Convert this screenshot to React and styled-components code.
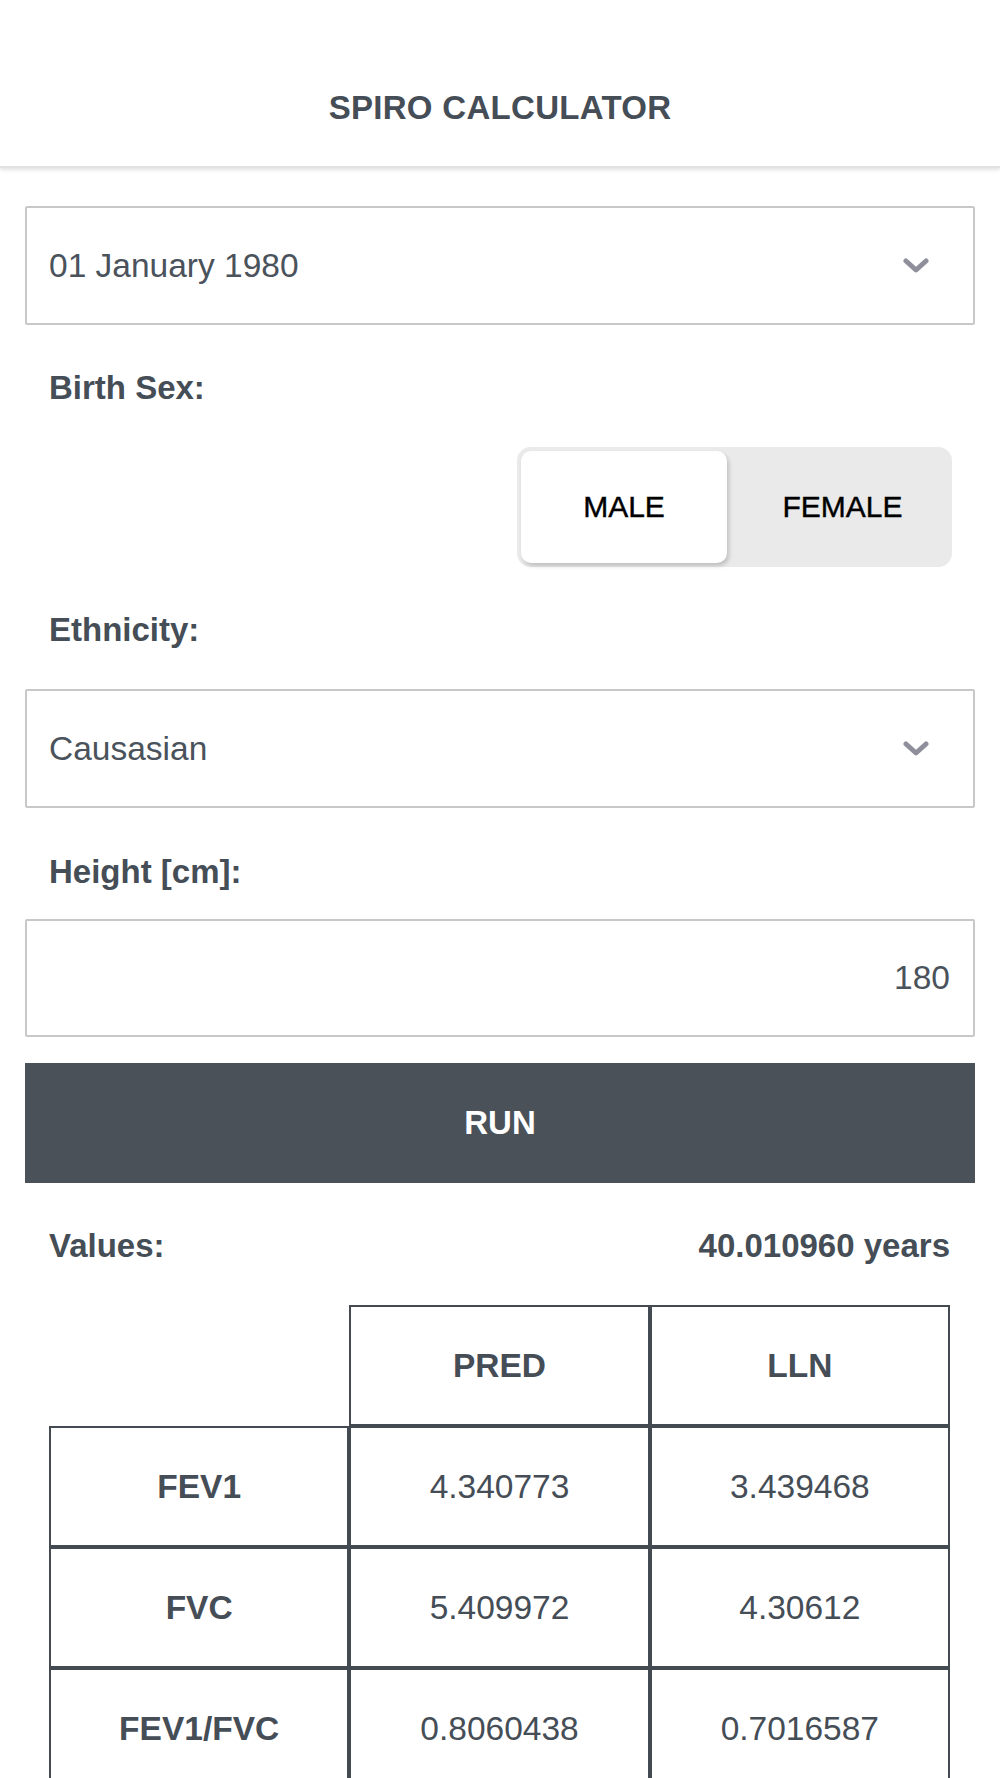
import React from "react";
import styled, { createGlobalStyle } from "styled-components";

const GlobalStyle = createGlobalStyle`
  body {
    margin: 0;
    background: #ffffff;
    font-family: "Liberation Sans", Arial, sans-serif;
    color: #454d56;
  }
  * {
    box-sizing: border-box;
  }
`;

const Page = styled.div`
  width: 1000px;
  min-height: 1778px;
  background: #ffffff;
`;

const Header = styled.header`
  height: 168px;
  padding-top: 50px;
  display: flex;
  align-items: center;
  justify-content: center;
  border-bottom: 2px solid #e2e2e2;
  box-shadow: 0 2px 4px rgba(0, 0, 0, 0.12);
`;

const Title = styled.h1`
  margin: 0;
  font-size: 33px;
  font-weight: bold;
  color: #454d56;
  letter-spacing: 0.3px;
`;

const Content = styled.main`
  padding: 38px 25px 0;
  display: flex;
  flex-direction: column;
`;

const SelectBox = styled.div`
  height: 119px;
  border: 2px solid #c8c8c8;
  border-radius: 2px;
  display: flex;
  align-items: center;
  justify-content: space-between;
  padding: 0 44px 0 22px;
  font-size: 33.5px;
  color: #4a525b;
`;

const Label = styled.div`
  padding-left: 24px;
  margin-top: ${(p) => p.$top || 43}px;
  margin-bottom: ${(p) => p.$bottom || 39}px;
  font-size: 33px;
  line-height: 40px;
  font-weight: bold;
  color: #454d56;
`;

const ToggleRow = styled.div`
  display: flex;
  justify-content: flex-end;
  padding-right: 23px;
`;

const Toggle = styled.div`
  width: 435px;
  height: 120px;
  padding: 4px;
  border-radius: 14px;
  background: #eaeaea;
  display: grid;
  grid-template-columns: 206px 1fr;
`;

const Segment = styled.div`
  display: flex;
  align-items: center;
  justify-content: center;
  padding-left: ${(p) => (p.$active ? "0" : "10px")};
  border-radius: 10px;
  font-size: 30px;
  color: #000000;
  -webkit-text-stroke: 0.4px #000000;
  background: ${(p) => (p.$active ? "#ffffff" : "transparent")};
  box-shadow: ${(p) => (p.$active ? "2px 3px 4px rgba(0, 0, 0, 0.18)" : "none")};
`;

const NumberInput = styled.input`
  height: 118px;
  width: 100%;
  border: 2px solid #c8c8c8;
  border-radius: 2px;
  padding: 0 23px;
  text-align: right;
  font-family: "Liberation Sans", Arial, sans-serif;
  font-size: 33.5px;
  color: #4a525b;
  outline: none;
`;

const RunButton = styled.button`
  margin-top: 26px;
  height: 120px;
  width: 100%;
  border: none;
  background: #4a5159;
  color: #ffffff;
  font-family: "Liberation Sans", Arial, sans-serif;
  font-size: 33px;
  font-weight: bold;
`;

const ValuesRow = styled.div`
  display: flex;
  justify-content: space-between;
  padding: 0 25px 0 24px;
  margin-top: 43px;
  margin-bottom: 39px;
  font-size: 33px;
  line-height: 40px;
  font-weight: bold;
  color: #454d56;
`;

const Table = styled.table`
  margin: 0 0 0 49px;
  border-collapse: separate;
  border-spacing: 0;
  table-layout: fixed;
  width: 901px;
`;

const Cell = styled.td`
  height: 121px;
  border: ${(p) => (p.$empty ? "none" : "2px solid #434a52")};
  text-align: center;
  vertical-align: middle;
  font-size: 33.5px;
  font-weight: ${(p) => (p.$bold ? "bold" : "normal")};
  color: #454d56;
  padding: 0;
`;

function Chevron() {
  return (
    <svg width="26" height="16" viewBox="0 0 26 16">
      <polyline
        points="3,3 13,12 23,3"
        fill="none"
        stroke="#8e8f9b"
        strokeWidth="5"
        strokeLinecap="round"
        strokeLinejoin="round"
      />
    </svg>
  );
}

const rows = [
  ["FEV1", "4.340773", "3.439468"],
  ["FVC", "5.409972", "4.30612"],
  ["FEV1/FVC", "0.8060438", "0.7016587"],
];

export default function App() {
  return (
    <Page>
      <GlobalStyle />
      <Header>
        <Title>SPIRO CALCULATOR</Title>
      </Header>
      <Content>
        <SelectBox>
          <span>01 January 1980</span>
          <Chevron />
        </SelectBox>

        <Label>Birth Sex:</Label>
        <ToggleRow>
          <Toggle>
            <Segment $active>MALE</Segment>
            <Segment>FEMALE</Segment>
          </Toggle>
        </ToggleRow>

        <Label>Ethnicity:</Label>
        <SelectBox>
          <span>Causasian</span>
          <Chevron />
        </SelectBox>

        <Label $top={44} $bottom={27}>Height [cm]:</Label>
        <NumberInput defaultValue="180" />

        <RunButton>RUN</RunButton>

        <ValuesRow>
          <span>Values:</span>
          <span>40.010960 years</span>
        </ValuesRow>
      </Content>
      <Table>
        <tbody>
          <tr>
            <Cell $empty />
            <Cell $bold>PRED</Cell>
            <Cell $bold>LLN</Cell>
          </tr>
          {rows.map((r) => (
            <tr key={r[0]}>
              <Cell $bold>{r[0]}</Cell>
              <Cell>{r[1]}</Cell>
              <Cell>{r[2]}</Cell>
            </tr>
          ))}
        </tbody>
      </Table>
    </Page>
  );
}
